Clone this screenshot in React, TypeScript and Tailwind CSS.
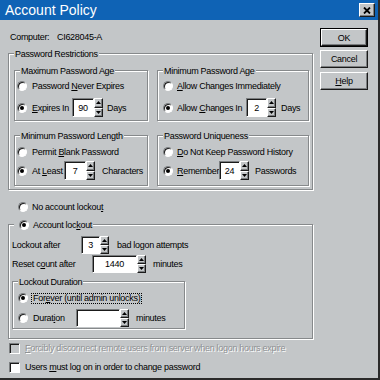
import type { ReactNode } from "react";

// Win32 style bevels
const sunken =
  "border border-t-[#7b7e80] border-l-[#7b7e80] border-b-white border-r-white shadow-[inset_1px_1px_0_#1a1a1a]";
const raised =
  "border border-t-white border-l-white border-b-[#1a1a1a] border-r-[#1a1a1a] shadow-[inset_-1px_-1px_0_#7b7e80]";
const etched = "border border-[#86898b] shadow-[inset_1px_1px_0_#fff,1px_1px_0_#fff]";

function U({ children }: { children: string }) {
  return <span className="underline underline-offset-1">{children}</span>;
}

function Radio({ on = false }: { on?: boolean }) {
  return (
    <span className="flex h-[10px] w-[10px] shrink-0 items-center justify-center rounded-full border border-t-[#7b7e80] border-l-[#7b7e80] border-b-white border-r-white bg-white shadow-[inset_1px_1px_0_#1a1a1a]">
      {on && <span className="h-[4px] w-[4px] rounded-full bg-black" />}
    </span>
  );
}

function Arrow({ up = false }: { up?: boolean }) {
  return (
    <svg width="5" height="3" viewBox="0 0 5 3">
      <path d={up ? "M2.5 0L5 3H0z" : "M0 0h5L2.5 3z"} fill="#000" />
    </svg>
  );
}

function SpinBox({ value, width, height }: { value: string; width: string; height: string }) {
  return (
    <div className={`flex shrink-0 ${height}`}>
      <div className={`${width} ${sunken} flex items-center justify-center bg-white`}>{value}</div>
      <div className="flex w-[9px] flex-col">
        <div className={`${raised} flex flex-1 items-center justify-center bg-[#c3c6c8]`}>
          <Arrow up />
        </div>
        <div className={`${raised} flex flex-1 items-center justify-center bg-[#c3c6c8]`}>
          <Arrow />
        </div>
      </div>
    </div>
  );
}

function Group({ label, className, children }: { label: ReactNode; className: string; children: ReactNode }) {
  return (
    <div className={`relative ${etched} ${className}`}>
      <div className="absolute -top-[6px] left-[5px] flex h-[12px] items-center bg-[#c3c6c8] px-[1px]">{label}</div>
      {children}
    </div>
  );
}

function Check({ disabled = false, children }: { disabled?: boolean; children: ReactNode }) {
  return (
    <div className="flex h-[12px] items-center pl-[1px]">
      <span
        className={`h-[11px] w-[11px] shrink-0 ${sunken} ${disabled ? "bg-[#c3c6c8]" : "bg-white"}`}
      />
      <span
        className={`ml-[5px] whitespace-nowrap ${disabled ? "text-[#8e9193] [text-shadow:1px_1px_0_#fff]" : ""}`}
      >
        {children}
      </span>
    </div>
  );
}

export default function App() {
  return (
    <div className="flex h-[380px] w-[380px] flex-col overflow-hidden border-r-2 border-b-2 border-r-[#2a2a2a] border-b-[#2a2a2a] bg-[#c3c6c8] font-['Liberation_Sans',Arial,sans-serif] text-[9px] leading-[12px] tracking-[-0.3px] text-black">
      {/* title bar */}
      <div className="flex h-[20px] shrink-0 items-center bg-[#0f63b5]">
        <span className="pl-[5px] text-[14px] leading-none tracking-normal text-white">Account Policy</span>
        <div className={`ml-auto mr-[3px] flex h-[14px] w-[16px] items-center justify-center bg-[#c3c6c8] ${raised}`}>
          <svg width="8" height="7" viewBox="0 0 8 7">
            <path d="M1 0.5l6 6M7 0.5l-6 6" stroke="#000" strokeWidth="1.8" />
          </svg>
        </div>
      </div>

      <div className="flex flex-1">
        {/* left column */}
        <div className="flex w-[313px] flex-col pl-[8px] pt-[11px]">
          <div className="flex h-[12px] items-center pl-[2px]">
            <span className="w-[47px]">Computer:</span>
            <span>CI628045-A</span>
          </div>

          <Group label="Password Restrictions" className="mt-[10px] h-[137px] w-[305px] pl-[5px] pt-[16px]">
            <div className="grid grid-cols-[134px_152px] gap-x-[9px] gap-y-[14px]">
              <Group label="Maximum Password Age" className="h-[51px] pl-[2px] pt-[9px]">
                <div className="flex h-[12px] items-center">
                  <Radio />
                  <span className="ml-[5px]">
                    Password <U>N</U>ever Expires
                  </span>
                </div>
                <div className="mt-[6px] flex h-[19px] items-center">
                  <Radio on />
                  <span className="ml-[5px] w-[40px]">
                    <U>E</U>xpires In
                  </span>
                  <SpinBox value="90" width="w-[22px]" height="h-[19px]" />
                  <span className="ml-[4px]">Days</span>
                </div>
              </Group>

              <Group label="Minimum Password Age" className="h-[51px] pl-[5px] pt-[9px]">
                <div className="flex h-[12px] items-center">
                  <Radio />
                  <span className="ml-[4px]">
                    <U>A</U>llow Changes Immediately
                  </span>
                </div>
                <div className="mt-[6px] flex h-[19px] items-center">
                  <Radio on />
                  <span className="ml-[4px] w-[69px]">
                    Allow <U>C</U>hanges In
                  </span>
                  <SpinBox value="2" width="w-[21px]" height="h-[19px]" />
                  <span className="ml-[5px]">Days</span>
                </div>
              </Group>

              <Group label="Minimum Password Length" className="h-[51px] pl-[2px] pt-[10px]">
                <div className="flex h-[12px] items-center">
                  <Radio />
                  <span className="ml-[5px]">
                    Permit <U>B</U>lank Password
                  </span>
                </div>
                <div className="mt-[3px] flex h-[19px] items-center">
                  <Radio on />
                  <span className="ml-[5px] w-[32px]">
                    At <U>L</U>east
                  </span>
                  <SpinBox value="7" width="w-[22px]" height="h-[19px]" />
                  <span className="ml-[7px]">Characters</span>
                </div>
              </Group>

              <Group label="Password Uniqueness" className="h-[51px] pl-[5px] pt-[10px]">
                <div className="flex h-[12px] items-center">
                  <Radio />
                  <span className="ml-[4px]">
                    <U>D</U>o Not Keep Password History
                  </span>
                </div>
                <div className="mt-[3px] flex h-[19px] items-center">
                  <Radio on />
                  <span className="ml-[4px] w-[42px] overflow-hidden whitespace-nowrap">
                    <U>R</U>emember
                  </span>
                  <SpinBox value="24" width="w-[21px]" height="h-[19px]" />
                  <span className="ml-[6px]">Passwords</span>
                </div>
              </Group>
            </div>
          </Group>

          <div className="mt-[11px] flex h-[12px] items-center pl-[10px]">
            <Radio />
            <span className="ml-[4px]">
              No account lockou<U>t</U>
            </span>
          </div>

          <Group
            label={
              <span className="flex items-center pl-[4px]">
                <Radio on />
                <span className="ml-[4px]">
                  Account loc<U>k</U>out
                </span>
              </span>
            }
            className="mt-[11px] h-[115px] w-[305px] pl-[3px] pt-[11px]"
          >
            <div className="flex h-[18px] items-center">
              <span className="w-[69px]">Lockout after</span>
              <SpinBox value="3" width="w-[19px]" height="h-[18px]" />
              <span className="ml-[8px]">bad logon attempts</span>
            </div>
            <div className="mt-[1px] flex h-[18px] items-center">
              <span className="w-[80px]">
                Reset c<U>o</U>unt after
              </span>
              <SpinBox value="1440" width="w-[45px]" height="h-[18px]" />
              <span className="ml-[7px]">minutes</span>
            </div>

            <Group label="Lockout Duration" className="mt-[8px] h-[48px] w-[173px] pl-[5px] pt-[10px]">
              <div className="flex h-[12px] items-center">
                <Radio on />
                <span className="ml-[3px] border border-dotted border-black px-[1px] leading-[9px]">
                  For<U>e</U>ver (until admin unlocks)
                </span>
              </div>
              <div className="mt-[5px] flex h-[18px] items-center">
                <Radio />
                <span className="ml-[5px] w-[43px]">
                  Durat<U>i</U>on
                </span>
                <SpinBox value="" width="w-[44px]" height="h-[18px]" />
                <span className="ml-[7px]">minutes</span>
              </div>
            </Group>
          </Group>

          <div className="mt-[3px]">
            <Check disabled>
              <U>F</U>orcibly disconnect remote users from server when logon hours expire
            </Check>
          </div>
          <div className="mt-[7px]">
            <Check>
              Users <U>m</U>ust log on in order to change password
            </Check>
          </div>
        </div>

        {/* buttons */}
        <div className="ml-[7px] flex w-[48px] flex-col pt-[8px]">
          <div className="h-[19px] border border-black">
            <div className={`flex h-full items-center justify-center ${raised}`}>OK</div>
          </div>
          <div className={`mt-[3px] flex h-[18px] items-center justify-center ${raised}`}>Cancel</div>
          <div className={`mt-[4px] flex h-[18px] items-center justify-center ${raised}`}>
            <span>
              <U>H</U>elp
            </span>
          </div>
        </div>
      </div>
    </div>
  );
}
